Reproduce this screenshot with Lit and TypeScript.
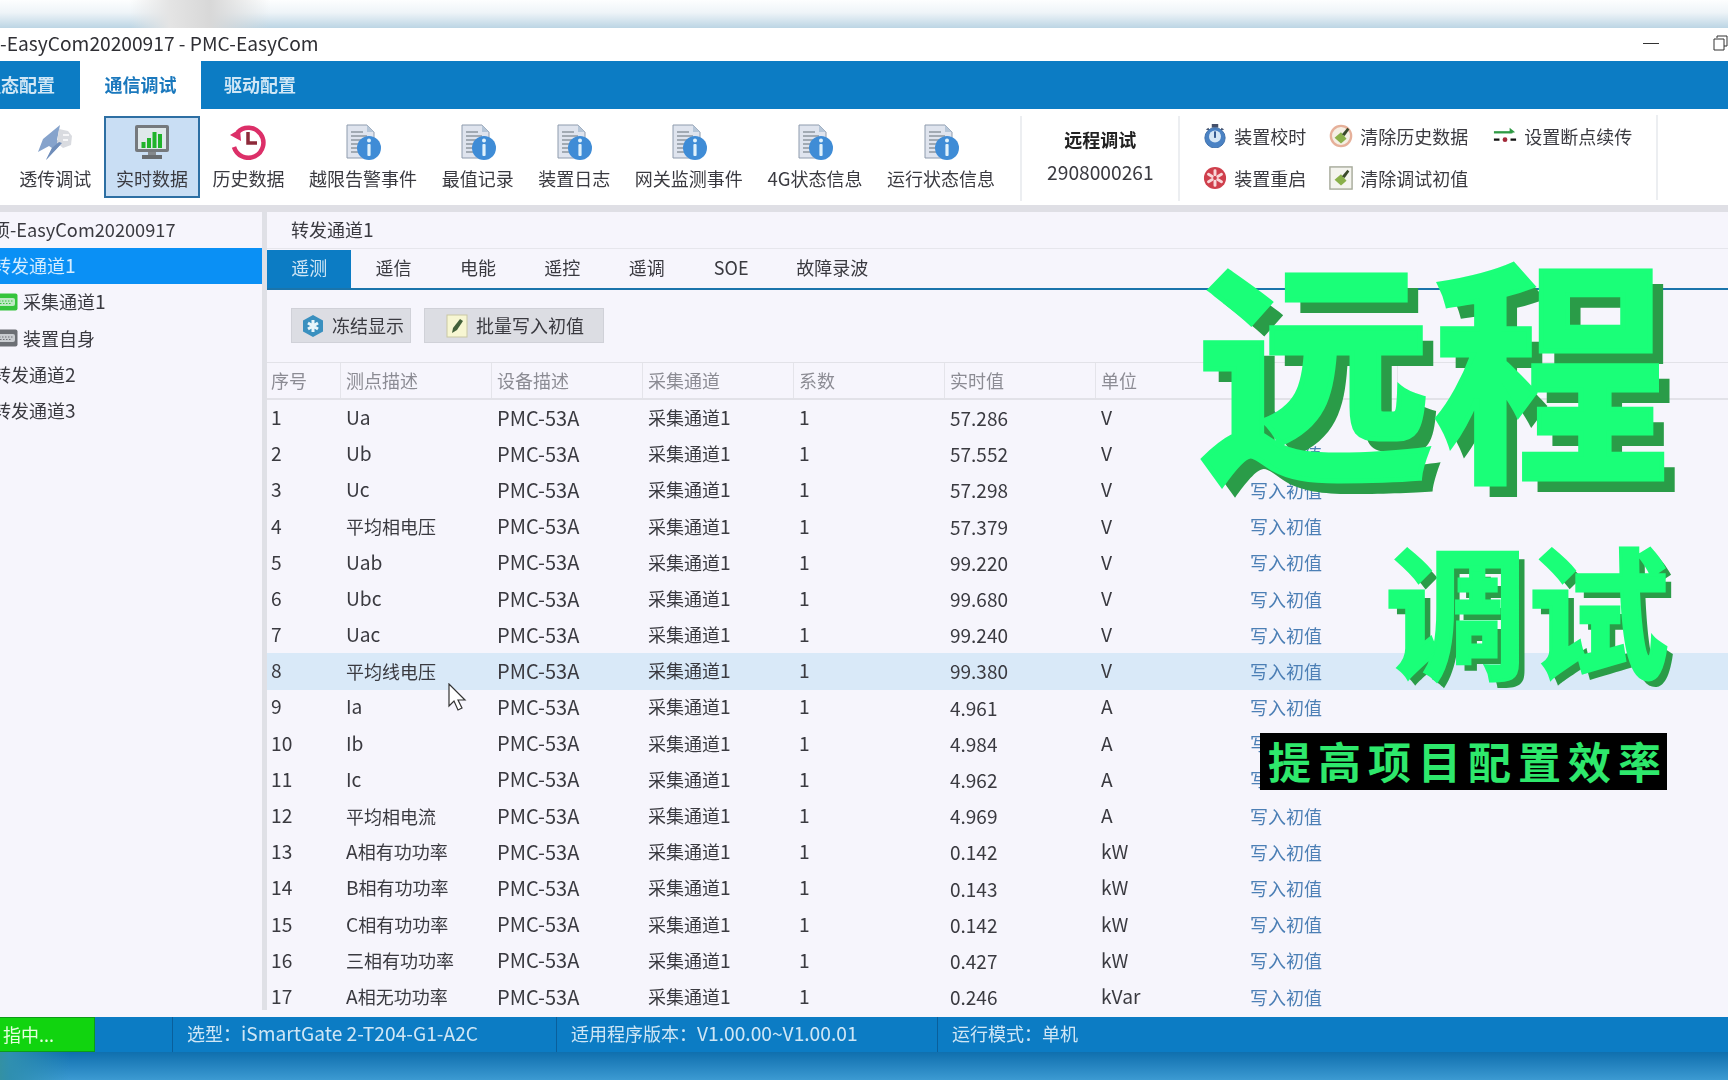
import { LitElement, html, css } from "lit";
import { customElement } from "lit/decorators.js";

const docIcon = html`<svg class="ico" viewBox="0 0 36 36"><path d="M2 1h20l7 7v26H2z" fill="#dfe4ee" stroke="#8e9bad" stroke-width="1"/><path d="M22 1v7h7z" fill="#b6c6d8"/><path d="M6 8h12M6 12h16M6 16h13M6 20h9M6 24h8M6 28h9" stroke="#8f96a0" stroke-width="1.5"/><circle cx="24" cy="24" r="12" fill="#3f8cd6"/><circle cx="24" cy="16.5" r="2" fill="#dff1fb"/><rect x="22.4" y="20" width="3.2" height="12" rx="1" fill="#dff1fb"/></svg>`;
const monitorIcon = html`<svg class="ico" viewBox="0 0 36 36"><rect x="1" y="1" width="34" height="27" rx="2" fill="#75797d"/><rect x="4" y="4" width="28" height="21" fill="#dfe8ea"/><rect x="7.500" y="18" width="4" height="6" fill="#1fb32a"/><rect x="13" y="14" width="4" height="10" fill="#1fb32a"/><rect x="18.500" y="8" width="4" height="16" fill="#1fb32a"/><rect x="24" y="10" width="4" height="14" fill="#1fb32a"/><path d="M14 28h8v3h-8z" fill="#85898d"/><path d="M8 31h20v4H8z" fill="#686c70"/></svg>`;
const clockIcon = html`<svg class="ico" viewBox="0 0 36 36"><path d="M7.500 8.500A15 15 0 1 1 4 23" fill="#fff" stroke="#dc2f68" stroke-width="4.500"/><path d="M0 11l10-6 1 12z" fill="#dc2f68"/><path d="M18 8v11h9" fill="none" stroke="#8e2a3a" stroke-width="3.500"/></svg>`;
const passIcon = html`<svg class="ico" viewBox="0 0 36 36"><path d="M23 1L6 15 1 28l11-6 3 2-6 12 16-17-5-3z" fill="#86a3cc"/><path d="M22 5l9 2 4 5-1 9-8 3-6-5z" fill="#d9dbe0"/><path d="M26 11h6M26 16h5" stroke="#f6f6f8" stroke-width="2"/><path d="M15 24l7-6 3 1-16 17z" fill="#6f8db9"/></svg>`;
const stopIcon = html`<svg class="sm" viewBox="0 0 26 26"><rect x="9.500" y="0" width="7" height="4" fill="#44506a"/><path d="M3 6l3-2 1 3zM23 6l-3-2-1 3z" fill="#44506a"/><circle cx="13" cy="15" r="11" fill="#4a82c4" stroke="#3d6ea8" stroke-width="1"/><circle cx="13" cy="13.500" r="6.500" fill="#d5e6f5"/><rect x="12" y="8" width="2" height="7" fill="#2a4f88"/></svg>`;
const brushCircle = html`<svg class="sm" viewBox="0 0 26 26"><circle cx="13" cy="13" r="11" fill="#f5efe4" stroke="#e6b09a" stroke-width="2.500"/><path d="M6 15l7-6 6 7-6 5z" fill="#8ab04a"/><path d="M14 11l6-7 2 2-5 7z" fill="#3a4a2a"/></svg>`;
const breakIcon = html`<svg class="sm" viewBox="0 0 26 26"><path d="M1 9h20" stroke="#2f9a44" stroke-width="2.500"/><path d="M18 4l6 5-6 1z" fill="#2f9a44"/><path d="M1 17h6M19 17h6" stroke="#111" stroke-width="2.500"/><circle cx="13" cy="17" r="2.600" fill="#a32a3a"/></svg>`;
const restartIcon = html`<svg class="sm" viewBox="0 0 26 26"><circle cx="13" cy="13" r="12" fill="#cf3f4c"/><g stroke="#f8d8da" stroke-width="3.200" stroke-linecap="round"><path d="M13 5v4.500M13 16.500V21M6 9l4 2.300M16 14.700l4 2.300M6 17l4-2.300M16 11.300L20 9"/></g></svg>`;
const brushBox = html`<svg class="sm" viewBox="0 0 26 26"><rect x="1" y="1" width="24" height="24" fill="#f4f4ee" stroke="#a4a898" stroke-width="1.500"/><path d="M6 15l7-6 6 7-6 5z" fill="#8ab04a"/><path d="M14 11l6-7 2 2-5 7z" fill="#3a4a2a"/></svg>`;
const snowIcon = html`<svg class="btn-ico" viewBox="0 0 24 24"><path d="M12 1l10 5.500v11L12 23 2 17.500v-11z" fill="#3a90bf"/><path d="M12 6v12M7 9l10 6M17 9L7 15" stroke="#e8f6fb" stroke-width="3"/></svg>`;
const penIcon = html`<svg class="btn-ico" viewBox="0 0 24 24"><rect x="2" y="1" width="20" height="22" fill="#f7f6d2" stroke="#c9c8a4"/><path d="M7 19l1-5 7-9 3 2-6 9z" fill="#42603a"/></svg>`;
const connIcon = (c: string, d: string) => html`<svg class="conn" viewBox="0 0 24 18"><rect x="0.500" y="0.500" width="23" height="17" rx="2" fill="${c}"/><rect x="3" y="5" width="18" height="8" rx="2" fill="${d}"/><path d="M5 8h14M6 10.500h12" stroke="${c}" stroke-dasharray="1.500 1.500"/></svg>`;

/* Latin runs are drawn a little larger than the CJK ones, as in the reference's UI font */
const mix = (s: string) =>
  s.split(/([\x20-\x7e]+)/).filter(Boolean).map((p) => (/^[\x20-\x7e]/.test(p) ? html`<span class="lat">${p}</span>` : p));

const tools = [
  ["透传调试", passIcon, false], ["实时数据", monitorIcon, true], ["历史数据", clockIcon, false],
  ["越限告警事件", docIcon, false], ["最值记录", docIcon, false], ["装置日志", docIcon, false],
  ["网关监测事件", docIcon, false], ["4G状态信息", docIcon, false], ["运行状态信息", docIcon, false],
] as const;

const rows: [string, string, string][] = [
  ["Ua","57.286","V"],["Ub","57.552","V"],["Uc","57.298","V"],["平均相电压","57.379","V"],
  ["Uab","99.220","V"],["Ubc","99.680","V"],["Uac","99.240","V"],["平均线电压","99.380","V"],
  ["Ia","4.961","A"],["Ib","4.984","A"],["Ic","4.962","A"],["平均相电流","4.969","A"],
  ["A相有功功率","0.142","kW"],["B相有功功率","0.143","kW"],["C相有功功率","0.142","kW"],
  ["三相有功功率","0.427","kW"],["A相无功功率","0.246","kVar"],
];

@customElement("app-root")
export class AppRoot extends LitElement {
  static styles = css`
    :host { display: block; position: relative; width: 1728px; height: 1080px; overflow: hidden;
      font-family: "Noto Sans CJK SC", "Noto Sans", sans-serif; font-size: 18px; color: #3a3a40; background: #f6f5fc; }
    .lat { font-size: 19.200px; }
    .shell { display: flex; flex-direction: column; width: 1788px; height: 1080px; margin-left: -60px; filter: blur(0.45px); }
    .top { height: 28px; flex: none; background:
      linear-gradient(90deg, transparent 0 190px, #e4e4e4 230px, #d8d8d8 270px, transparent 330px),
      linear-gradient(180deg, #fdfefe 0, #eef4f8 45%, #bcd5e4 100%); }
    .title { height: 33px; flex: none; background: #fff; display: flex; align-items: center; padding: 0 0 2px 24px; box-sizing: border-box; color: #2f2f34; position: relative; line-height: 1; white-space: pre; }
    .min { position: absolute; left: 1703px; top: 15px; width: 16px; height: 1px; background: #333; }
    .restore { position: absolute; left: 1773px; top: 7px; width: 15px; height: 16px; }
    .menu { height: 48px; flex: none; background: #0c7cc4; display: flex; font-weight: 700; color: #cfe6f5; line-height: 47px; }
    .menu span { width: 121px; text-align: center; }
    .menu .m0 { width: 140px; box-sizing: border-box; padding-left: 43px; text-align: left; }
    .menu .on { background: #fff; color: #1a78bd; }
    .menu .m2 { width: 118px; }
    .toolbar { height: 96px; flex: none; background: #fff; display: flex; padding-left: 67px; align-items: flex-start; }
    .tool { height: 82px; margin-top: 7px; padding: 0 10.300px; box-sizing: border-box; display: flex; flex-direction: column; align-items: center; white-space: nowrap; line-height: 1; border: 2px solid transparent; }
    .tool.on { background: #c9def4; border-color: #2d6fa3; }
    .tool .lat { font-size: 18.500px; }
    .ico { width: 36px; height: 36px; margin: 6px 0 9px; flex: none; }
    .remote { margin-top: 7px; height: 85px; margin-left: 13px; width: 156px; border-left: 2px solid #eceef1; border-right: 2px solid #eceef1; display: flex; flex-direction: column; align-items: center; line-height: 1; }
    .remote b { color: #222; margin-top: 14px; }
    .remote span { margin-top: 15px; }
    .actions { display: grid; grid-template-columns: 126px 164px 164px; grid-auto-rows: 42px; padding: 0 0 0 23px; width: 453px; height: 85px; margin-top: 6px; border-right: 2px solid #eceef1; white-space: nowrap; line-height: 1; }
    .act { display: flex; align-items: center; gap: 7px; }
    .sm { width: 24px; height: 24px; flex: none; }
    .sep { height: 7px; flex: none; background: #dfdfe5; }
    .body { flex: 1; min-height: 0; display: flex; gap: 5px; background: #dfe0e6; }
    .tree { width: 322px; flex: none; height: 798px; background: #f6f5fc; }
    .node { height: 36.200px; padding: 0 0 1px 53px; box-sizing: border-box; display: flex; align-items: center; gap: 5px; white-space: nowrap; line-height: 1; }
    .root { padding-left: 52px; height: 36px; }
    .root .lat { font-size: 18.200px; }
    .node.sel { background: #0a90f5; color: #d4ecff; }
    .conn { width: 24px; height: 18px; flex: none; margin-left: 1px; }
    .main { flex: 1; min-width: 0; height: 798px; background: #f6f5fc; overflow: hidden; }
    .path { height: 37px; line-height: 35px; padding-left: 24px; border-bottom: 1px solid #e6e6ec; box-sizing: border-box; }
    .tabs { display: flex; height: 40px; border-bottom: 2px solid #1a74ab; box-sizing: border-box; margin-top: 1px; line-height: 35px; }
    .tabs span { width: 84.400px; text-align: center; }
    .tabs .on { background: #0c7cc4; color: #cfe6f5; }
    .tabs .wide { width: 118px; }
    .btns { display: flex; gap: 13px; padding: 18px 0 0 24px; height: 72px; box-sizing: border-box; }
    .btn { height: 35px; background: #dcdde3; border: 1px solid #d0d1d8; box-sizing: border-box; display: flex; align-items: center; gap: 7px; padding: 0 9px 2px; line-height: 1; white-space: nowrap; }
    .btn.b1 { width: 120px; } .btn.b2 { width: 180px; padding-left: 20px; }
    .btn-ico { width: 24px; height: 24px; flex: none; margin-top: 2px; }
    .grid-row { display: grid; grid-template-columns: 74px repeat(7, 151px) 1fr; white-space: nowrap; align-items: center; height: 36.200px; padding-bottom: 1px; box-sizing: border-box; line-height: 1; }
    .grid-row > span { padding-left: 5px; }
    .grid-row .num { padding-left: 4px; }
    .grid-row .pmc .lat { font-size: 20px; }
    .grid-row .val .lat { font-size: 19px; }
    .head { height: 38px; padding-bottom: 0; border-top: 1px solid #e2e2e8; border-bottom: 2px solid #e2e2e8; color: #8c8c94; align-items: stretch; line-height: 34px; }
    .head > span { border-right: 1px solid #e4e4ea; box-sizing: border-box; }
    .head > span:first-child { padding-left: 4px; }
    .head > span:last-child { border-right: 0; }
    .grid-row.hi { background: #d9e9f8; }
    .grid-row .link { color: #4c7fb5; padding-left: 3px; }
    .status { height: 35px; flex: none; margin-top: 7px; background: #0c7cc4; color: #cfe6f5; display: flex; align-items: center; line-height: 33px; white-space: nowrap; }
    .run { width: 155px; height: 35px; box-sizing: border-box; padding-left: 62px; background: #11d40f; border: 1px solid #0c9c18; color: #e7ffe0; }
    .st { height: 35px; box-sizing: border-box; padding-left: 14px; border-left: 1px solid #0a5f9b; }
    .gap { width: 77px; } .s1 { width: 384px; } .s2 { width: 381px; } .s3 { flex: 1; }
    .bottom { height: 28px; flex: none; background: linear-gradient(90deg, #4c9a55 0, #2f8fb0 70px, transparent 130px), linear-gradient(180deg, #0f6fae, #3c9ad2); }
    .overlay { position: absolute; inset: 0; pointer-events: none; font-family: "Noto Sans CJK SC", sans-serif; }
    .big { position: absolute; left: 1197px; top: 242px; font-size: 236px; line-height: 1; font-weight: 700; color: #1aff78; -webkit-text-stroke: 5px #1aff78; text-shadow: 13px 13px 0 #2a9c48; white-space: nowrap; }
    .mid { position: absolute; left: 1385px; top: 535px; font-size: 142px; line-height: 1; font-weight: 700; color: #1aff78; -webkit-text-stroke: 3px #1aff78; text-shadow: 7px 7px 0 #2a9c48; white-space: nowrap; }
    .tag { position: absolute; left: 1260px; top: 733px; width: 407px; height: 57px; box-sizing: border-box; background: #000; color: #2ee86c; font-size: 43px; font-weight: 700; line-height: 55px; padding-left: 8px; letter-spacing: 7px; white-space: nowrap; overflow: hidden; }
    .cursor { position: absolute; left: 448px; top: 683px; width: 20px; height: 29px; }
  `;

  render() {
    return html`
      <div class="shell">
        <div class="top"></div>
        <div class="title">项目${mix("-EasyCom20200917 - PMC-EasyCom")}
          <i class="min"></i>
          <svg class="restore" viewBox="0 0 15 16"><path d="M4 3V1h10v10h-3M1 4h10v11H1z" fill="#fff" stroke="#333"/></svg>
        </div>
        <div class="menu"><span class="m0">组态配置</span><span class="on">通信调试</span><span class="m2">驱动配置</span></div>
        <div class="toolbar">
          ${tools.map(([t, ic, on]) => html`<div class="tool ${on ? "on" : ""}">${ic}<div>${mix(t)}</div></div>`)}
          <div class="remote"><b>远程调试</b><span>${mix("2908000261")}</span></div>
          <div class="actions">
            <div class="act">${stopIcon}装置校时</div><div class="act">${brushCircle}清除历史数据</div><div class="act">${breakIcon}设置断点续传</div>
            <div class="act">${restartIcon}装置重启</div><div class="act">${brushBox}清除调试初值</div>
          </div>
        </div>
        <div class="sep"></div>
        <div class="body">
          <div class="tree">
            <div class="node root"><div>项${mix("-EasyCom20200917")}</div></div>
            <div class="node sel"><div>转发通道${mix("1")}</div></div>
            <div class="node">${connIcon("#35c43c", "#bfe8c4")}<div>采集通道${mix("1")}</div></div>
            <div class="node">${connIcon("#6c6f74", "#c9ccd0")}<div>装置自身</div></div>
            <div class="node"><div>转发通道${mix("2")}</div></div>
            <div class="node"><div>转发通道${mix("3")}</div></div>
          </div>
          <div class="main">
            <div class="path">转发通道${mix("1")}</div>
            <div class="tabs">
              <span class="on">遥测</span><span>遥信</span><span>电能</span><span>遥控</span><span>遥调</span><span>SOE</span><span class="wide">故障录波</span>
            </div>
            <div class="btns">
              <div class="btn b1">${snowIcon}冻结显示</div>
              <div class="btn b2">${penIcon}批量写入初值</div>
            </div>
            <div class="grid-row head">
              <span>序号</span><span>测点描述</span><span>设备描述</span><span>采集通道</span><span>系数</span><span>实时值</span><span>单位</span><span></span><span></span>
            </div>
            ${rows.map(([n, v, u], i) => html`
              <div class="grid-row ${i === 7 ? "hi" : ""}">
                <span class="num">${mix(String(i + 1))}</span><span>${mix(n)}</span><span class="pmc">${mix("PMC-53A")}</span><span>采集通道${mix("1")}</span><span>${mix("1")}</span><span class="val">${mix(v)}</span><span>${mix(u)}</span><span class="link">写入初值</span><span></span>
              </div>`)}
          </div>
        </div>
        <div class="status">
          <div class="run">指中...</div>
          <div class="gap"></div>
          <div class="st s1">选型：${mix("iSmartGate 2-T204-G1-A2C")}</div>
          <div class="st s2">适用程序版本：${mix("V1.00.00~V1.00.01")}</div>
          <div class="st s3">运行模式：单机</div>
        </div>
        <div class="bottom"></div>
      </div>
      <div class="overlay">
        <svg class="cursor" viewBox="0 0 20 29"><path d="M1 1v22l5-5 4 9 4-2-4-8h7z" fill="#fff" stroke="#333" stroke-width="1.200"/></svg>
        <div class="big">远程</div>
        <div class="mid">调试</div>
        <div class="tag">提高项目配置效率</div>
      </div>
    `;
  }
}
